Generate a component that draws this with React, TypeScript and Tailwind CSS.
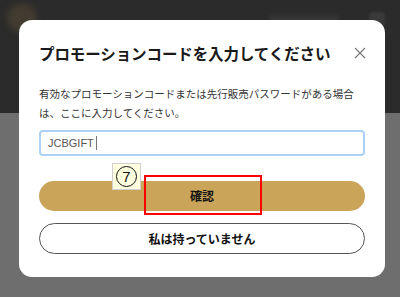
import React from 'react'

const jp = "font-['Noto_Sans_CJK_JP','Noto_Sans',sans-serif]"

function CloseIcon() {
  return (
    <svg width="12" height="12" viewBox="0 0 12 12" className="block">
      <path d="M1 1 L11 11 M11 1 L1 11" stroke="#7a7a7a" strokeWidth="1.2" fill="none" />
    </svg>
  )
}

export default function App() {
  return (
    <div className={`relative w-[400px] h-[297px] overflow-hidden ${jp}`}>
      {/* dimmed page behind the dialog */}
      <div className="flex flex-col h-full">
        <div className="h-[113px] bg-[#2b2b2b] flex items-start justify-between px-[7px] pt-[4px]">
          <div className="w-[30px] h-[28px] rounded-full bg-[#423c30] blur-[3px]" />
          <div className="flex items-center gap-[30px] pt-[8px] pr-[8px]">
            <div className="w-[70px] h-[8px] rounded bg-[#363636] blur-[2px]" />
            <div className="w-[16px] h-[14px] rounded-sm bg-[#3a3a3a] blur-[1px]" />
          </div>
        </div>
        <div className="flex-1 bg-[#6e6e6e]" />
      </div>

      {/* dialog */}
      <div className="absolute left-[19px] top-[20px] w-[366px] h-[257px] bg-white rounded-[13px] px-[20px] pt-[23px]">
        <div className="flex items-center justify-between">
          <h2 className="text-[15.5px] leading-[20px] font-bold text-[#1a1a1a] tracking-[-0.1px]">
            プロモーションコードを入力してください
          </h2>
          <div className="mr-[-1px]">
            <CloseIcon />
          </div>
        </div>
        <p className="mt-[21px] text-[10.5px] leading-[19px] text-[#333]">
          有効なプロモーションコードまたは先行販売パスワードがある場合
          <br />
          は、ここに入力してください。
        </p>
        <div className="mt-[8px] h-[26px] rounded-[4px] border-2 border-[#abd2f6] flex items-center pl-[7px]">
          <span className="font-['Liberation_Sans',sans-serif] text-[11px] text-[#555]">JCBGIFT</span>
          <span className="ml-[2px] w-px h-[14px] bg-[#777]" />
        </div>
        <button className="mt-[25px] w-full h-[30px] rounded-full bg-[#c9a459] flex items-center justify-center text-[12px] font-bold text-[#111]">
          確認
        </button>
        <button className="mt-[12px] w-full h-[31px] rounded-full border border-[#555] bg-white flex items-center justify-center text-[12px] font-bold text-[#111]">
          私は持っていません
        </button>
      </div>

      {/* annotation marks */}
      <div className="absolute left-[112px] top-[163px] w-[29px] h-[27px] bg-[#ffffe0] border border-[#cfcfcf] flex items-center justify-center">
        <div className="w-[21px] h-[21px] rounded-full border-[1.3px] border-[#111] flex items-center justify-center font-['Liberation_Sans',sans-serif] text-[15px] leading-none text-[#111]">
          7
        </div>
      </div>
      <div className="absolute left-[144px] top-[175px] w-[118px] h-[40px] border-2 border-[#ff0000]" />
    </div>
  )
}
